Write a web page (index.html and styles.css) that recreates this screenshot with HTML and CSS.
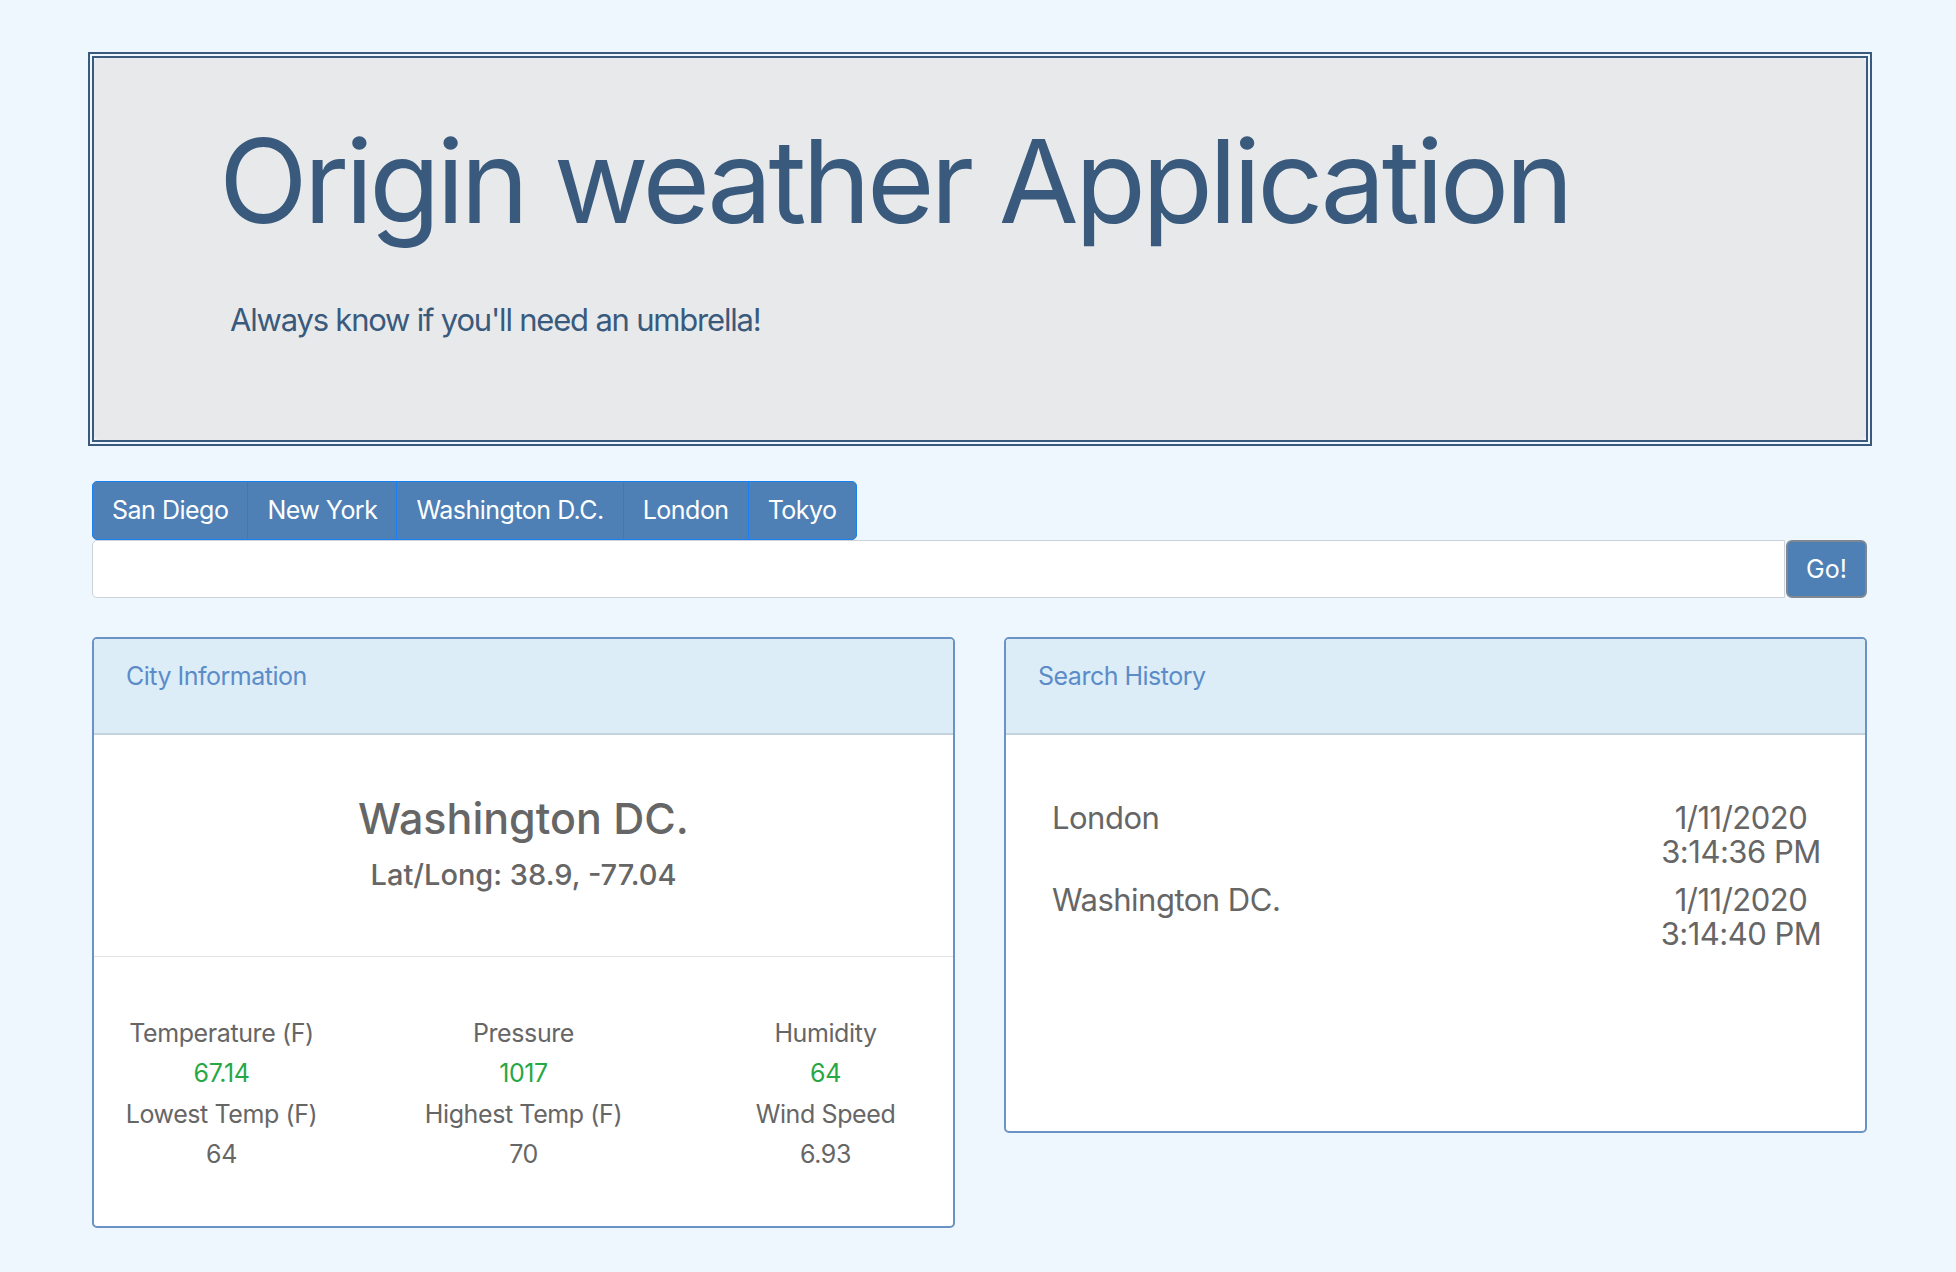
FILE: index.html
```html
<!DOCTYPE html>
<html lang="en">
<head>
<meta charset="utf-8">
<title>Origin weather Application</title>
<link rel="stylesheet" href="styles.css">
</head>
<body>
<div class="page">
  <header class="hero-frame">
    <div class="hero">
      <h1 class="hero-title">Origin weather Application</h1>
      <p class="hero-lead">Always know if you'll need an umbrella!</p>
    </div>
  </header>

  <div class="city-tabs">
    <button class="city-tab">San Diego</button>
    <button class="city-tab">New York</button>
    <button class="city-tab">Washington D.C.</button>
    <button class="city-tab">London</button>
    <button class="city-tab">Tokyo</button>
  </div>

  <div class="search">
    <input class="search-input" type="text" aria-label="City">
    <button class="search-go">Go!</button>
  </div>

  <div class="cards">
    <section class="card">
      <div class="card-header">City Information</div>
      <div class="city-summary">
        <h3 class="city-name">Washington DC.</h3>
        <div class="city-coords">Lat/Long: 38.9, -77.04</div>
      </div>
      <div class="stats">
        <div class="stat-label">Temperature (F)</div>
        <div class="stat-label">Pressure</div>
        <div class="stat-label">Humidity</div>
        <div class="stat-value good">67.14</div>
        <div class="stat-value good">1017</div>
        <div class="stat-value good">64</div>
        <div class="stat-label">Lowest Temp (F)</div>
        <div class="stat-label">Highest Temp (F)</div>
        <div class="stat-label">Wind Speed</div>
        <div class="stat-value">64</div>
        <div class="stat-value">70</div>
        <div class="stat-value">6.93</div>
      </div>
    </section>

    <section class="card">
      <div class="card-header">Search History</div>
      <div class="history">
        <div class="history-row">
          <div class="history-city">London</div>
          <div class="history-time">1/11/2020<br>3:14:36 PM</div>
        </div>
        <div class="history-row">
          <div class="history-city">Washington DC.</div>
          <div class="history-time">1/11/2020<br>3:14:40 PM</div>
        </div>
      </div>
    </section>
  </div>
</div>
</body>
</html>
```

FILE: styles.css
```css
* { box-sizing: border-box; }

html, body {
  margin: 0;
  padding: 0;
  background: #eef6fe;
  font-family: Inter, "Noto Sans", "Liberation Sans", sans-serif;
  color: #666666;
}

.page {
  width: 1775px;
  margin-left: 92px;
  padding-top: 52px;
  padding-bottom: 40px;
}

.hero-frame {
  margin: 0 -5px 0 -4px;
  border: 6px double #395a7c;
}

.hero {
  background: #e8e9eb;
  border-radius: 5px;
  padding: 54px 40px 96px 125px;
  color: #395a7c;
}

.hero-title {
  margin: 0;
  font-size: 116px;
  font-weight: 400;
  line-height: 139px;
  letter-spacing: -4px;
}

.hero-lead {
  margin: 45px 0 0 11px;
  font-size: 31px;
  line-height: 48px;
  letter-spacing: -1.2px;
}

.city-tabs {
  display: inline-flex;
  margin-top: 35px;
  border: 1px solid #1a7ff3;
  border-radius: 5px;
  overflow: hidden;
  background: #4e80b5;
}

.city-tab {
  font-family: inherit;
  font-size: 25px;
  line-height: 38px;
  padding: 9px 19px 10px;
  color: #ffffff;
  background: #4e80b5;
  border: 0;
  border-left: 1px solid #1a7ff3;
  letter-spacing: -0.5px;
}

.city-tab:first-child { border-left: 0; }

.search {
  display: flex;
  height: 58px;
}

.search-input {
  flex: 1;
  height: 58px;
  border: 1px solid #cdd3da;
  border-radius: 5px 0 0 5px;
  background: #ffffff;
  margin: 0;
}

.search-go {
  width: 81px;
  height: 58px;
  margin-left: 1px;
  font-family: inherit;
  font-size: 25px;
  color: #ffffff;
  background: #4e80b5;
  border: 2px solid #7f8892;
  border-radius: 6px;
}

.cards {
  display: grid;
  grid-template-columns: 1fr 1fr;
  column-gap: 49px;
  align-items: start;
  margin-top: 39px;
}

.card {
  background: #ffffff;
  border: 2px solid #6a92c4;
  border-radius: 5px;
  overflow: hidden;
}

.card-header {
  background: #dcedf8;
  color: #5b8cc8;
  font-size: 25px;
  line-height: 38px;
  padding: 18px 32px 38px;
  border-bottom: 2px solid #c4d4de;
  letter-spacing: -0.5px;
}

.city-summary {
  text-align: center;
  padding: 58px 32px 64px;
  border-bottom: 1px solid #e3e3e3;
}

.city-name {
  margin: 0;
  font-size: 43px;
  font-weight: 500;
  line-height: 51px;
  color: #666666;
  letter-spacing: 0;
}

.city-coords {
  margin-top: 14px;
  font-size: 29px;
  font-weight: 500;
  line-height: 34px;
  letter-spacing: 0;
}

.stats {
  display: grid;
  grid-template-columns: 255px 1fr 255px;
  padding: 56px 0 51px;
  text-align: center;
  font-size: 25px;
  line-height: 40.4px;
  letter-spacing: -0.4px;
}

.stat-value.good { color: #28a745; }

.history {
  padding: 66px 32px 181px 46px;
}

.history-row {
  display: flex;
  justify-content: space-between;
  font-size: 31px;
  line-height: 33.6px;
  letter-spacing: -0.5px;
}

.history-row + .history-row { margin-top: 15px; }

.history-time {
  width: 184px;
  text-align: center;
}
```
